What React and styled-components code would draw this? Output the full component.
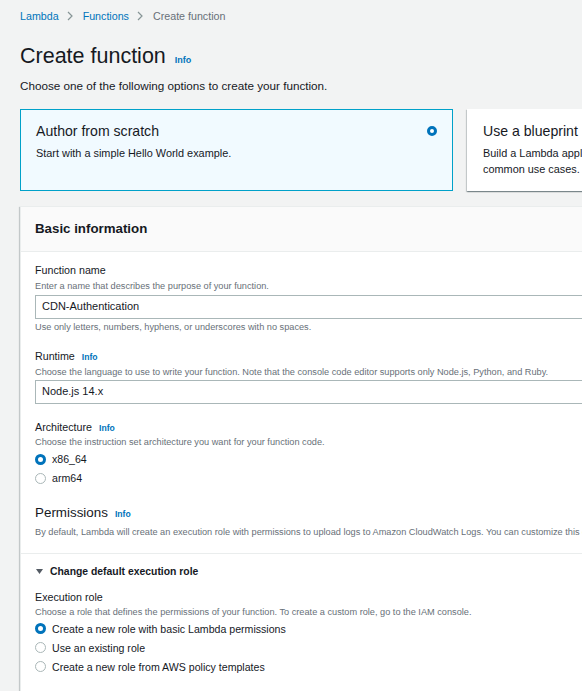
import React from 'react'
import styled, { createGlobalStyle } from 'styled-components'

const GlobalStyle = createGlobalStyle`
  html, body {
    margin: 0;
    padding: 0;
    overflow: hidden;
    background: #f2f3f3;
    color: #16191f;
    font-family: 'Liberation Sans', Arial, sans-serif;
  }
`

const Page = styled.div`
  width: 1327px;
  padding: 8px 0 0 20px;
`

const Breadcrumbs = styled.nav`
  display: flex;
  align-items: center;
  font-size: 10.7px;
  line-height: 16px;
`

const Crumb = styled.span`
  color: ${(p) => (p.current ? '#687078' : '#0073bb')};
`

const Chevron = styled.svg`
  width: 6px;
  height: 10px;
  margin: 0 10px 0 8px;
`

const TitleRow = styled.div`
  display: flex;
  align-items: baseline;
  gap: 9px;
  margin-top: 18px;
`

const Title = styled.h1`
  margin: 0;
  font-size: 21.5px;
  line-height: 28px;
  font-weight: 400;
`

const Info = styled.span`
  color: #0073bb;
  font-weight: 700;
  font-size: ${(p) => p.size || 8.6}px;
`

const Lead = styled.p`
  margin: 8px 0 0;
  font-size: 11.7px;
  line-height: 16px;
`

const Cards = styled.div`
  display: grid;
  grid-template-columns: repeat(3, 433px);
  gap: 14px;
  margin-top: 15px;
`

const Card = styled.div`
  box-sizing: border-box;
  min-height: 82px;
  padding: 11px 15px 13px;
  background: ${(p) => (p.selected ? '#f1faff' : '#fff')};
  border: 1px solid ${(p) => (p.selected ? '#00a1c9' : '#fff')};
  box-shadow: ${(p) =>
    p.selected
      ? 'none'
      : '0 1px 1px 0 rgba(0,28,36,.3), 1px 1px 1px 0 rgba(0,28,36,.15), -1px 1px 1px 0 rgba(0,28,36,.15)'};
`

const CardHead = styled.div`
  display: flex;
  align-items: center;
  justify-content: space-between;
`

const CardTitle = styled.div`
  font-size: 14.1px;
  line-height: 20px;
`

const CardText = styled.div`
  margin-top: 4px;
  font-size: 10.9px;
  line-height: 16px;
`

const Radio = styled.span`
  box-sizing: border-box;
  flex: none;
  width: ${(p) => p.size || 11}px;
  height: ${(p) => p.size || 11}px;
  border-radius: 50%;
  background: #fff;
  border: ${(p) => (p.checked ? `${p.ring || 3.5}px solid #0073bb` : '1px solid #aab7b8')};
`

const Panel = styled.section`
  margin-top: 15px;
  background: #fff;
  border-top: 1px solid #eaeded;
  border-left: 1px solid #eaeded;
  box-shadow: 0 1px 1px 0 rgba(0,28,36,.3), 1px 1px 1px 0 rgba(0,28,36,.15), -1px 1px 1px 0 rgba(0,28,36,.15);
`

const PanelHeader = styled.div`
  padding: 12px 14px;
  background: #fafafa;
  border-bottom: 1px solid #eaeded;
`

const PanelTitle = styled.h2`
  margin: 0;
  font-size: 13.3px;
  line-height: 20px;
  font-weight: 700;
`

const Section = styled.div`
  padding: ${(p) => p.pad};
  border-top: ${(p) => (p.divided ? '1px solid #eaeded' : 'none')};
`

const LabelRow = styled.div`
  display: flex;
  align-items: baseline;
  gap: 7px;
  margin-top: ${(p) => p.gap || 0}px;
  font-size: ${(p) => (p.big ? 13.4 : 10.7)}px;
  line-height: ${(p) => (p.big ? 18 : 14)}px;
`

const Hint = styled.div`
  margin-top: ${(p) => p.gap || 0}px;
  color: #687078;
  font-size: 9.2px;
  line-height: 12px;
  white-space: nowrap;
`

const Input = styled.div`
  box-sizing: border-box;
  width: 800px;
  height: 24px;
  margin-top: ${(p) => p.gap || 0}px;
  padding: 0 6px;
  border: 1px solid #aab7b8;
  font-size: 11px;
  line-height: 21px;
`

const Options = styled.div`
  margin-top: ${(p) => p.gap || 0}px;
`

const Option = styled.label`
  display: flex;
  align-items: center;
  gap: 6px;
  height: 19px;
  font-size: 10.6px;
`

const Expander = styled.div`
  display: flex;
  align-items: center;
  gap: 7px;
  padding-left: 1px;
  font-size: 10.4px;
  line-height: 14px;
  font-weight: 700;
`

const Caret = styled.svg`
  width: 7px;
  height: 5px;
`

const RadioList = ({ items, gap }) => (
  <Options gap={gap}>
    {items.map((item, i) => (
      <Option key={item}>
        <Radio checked={i === 0} />
        {item}
      </Option>
    ))}
  </Options>
)

const Sep = () => (
  <Chevron viewBox="0 0 6 10">
    <polyline points="1,1 5,5 1,9" fill="none" stroke="#879596" strokeWidth="1.2" />
  </Chevron>
)

export default function App() {
  return (
    <>
      <GlobalStyle />
      <Page>
        <Breadcrumbs>
          <Crumb>Lambda</Crumb>
          <Sep />
          <Crumb>Functions</Crumb>
          <Sep />
          <Crumb current>Create function</Crumb>
        </Breadcrumbs>

        <TitleRow>
          <Title>Create function</Title>
          <Info size={9}>Info</Info>
        </TitleRow>
        <Lead>Choose one of the following options to create your function.</Lead>

        <Cards>
          <Card selected>
            <CardHead>
              <CardTitle>Author from scratch</CardTitle>
              <Radio checked size={10} ring={3} />
            </CardHead>
            <CardText>Start with a simple Hello World example.</CardText>
          </Card>
          <Card>
            <CardHead>
              <CardTitle>Use a blueprint</CardTitle>
              <Radio size={10} />
            </CardHead>
            <CardText>
              Build a Lambda application from sample code and configuration presets for common use cases.
            </CardText>
          </Card>
          <Card>
            <CardHead>
              <CardTitle>Container image</CardTitle>
              <Radio size={10} />
            </CardHead>
            <CardText>Select a container image to deploy for your function.</CardText>
          </Card>
        </Cards>

        <Panel>
          <PanelHeader>
            <PanelTitle>Basic information</PanelTitle>
          </PanelHeader>

          <Section pad="11px 14px 15px">
            <LabelRow>Function name</LabelRow>
            <Hint gap={2.5}>Enter a name that describes the purpose of your function.</Hint>
            <Input gap={3}>CDN-Authentication</Input>
            <Hint gap={2}>Use only letters, numbers, hyphens, or underscores with no spaces.</Hint>

            <LabelRow gap={16.3}>
              Runtime <Info>Info</Info>
            </LabelRow>
            <Hint gap={2}>
              Choose the language to use to write your function. Note that the console code editor supports only
              Node.js, Python, and Ruby.
            </Hint>
            <Input gap={2.5}>Node.js 14.x</Input>

            <LabelRow gap={16}>
              Architecture <Info>Info</Info>
            </LabelRow>
            <Hint gap={1}>Choose the instruction set architecture you want for your function code.</Hint>
            <RadioList gap={1.5} items={['x86_64', 'arm64']} />

            <LabelRow big gap={16}>
              Permissions <Info>Info</Info>
            </LabelRow>
            <Hint gap={3}>
              By default, Lambda will create an execution role with permissions to upload logs to Amazon CloudWatch
              Logs. You can customize this default role later when adding triggers.
            </Hint>
          </Section>

          <Section divided pad="11px 14px 20px">
            <Expander>
              <Caret viewBox="0 0 7 5">
                <polygon points="0,0 7,0 3.5,5" fill="#545b64" />
              </Caret>
              Change default execution role
            </Expander>
            <LabelRow gap={11}>Execution role</LabelRow>
            <Hint gap={2}>
              Choose a role that defines the permissions of your function. To create a custom role, go to the IAM
              console.
            </Hint>
            <RadioList
              gap={1.5}
              items={[
                'Create a new role with basic Lambda permissions',
                'Use an existing role',
                'Create a new role from AWS policy templates',
              ]}
            />
          </Section>
        </Panel>
      </Page>
    </>
  )
}
